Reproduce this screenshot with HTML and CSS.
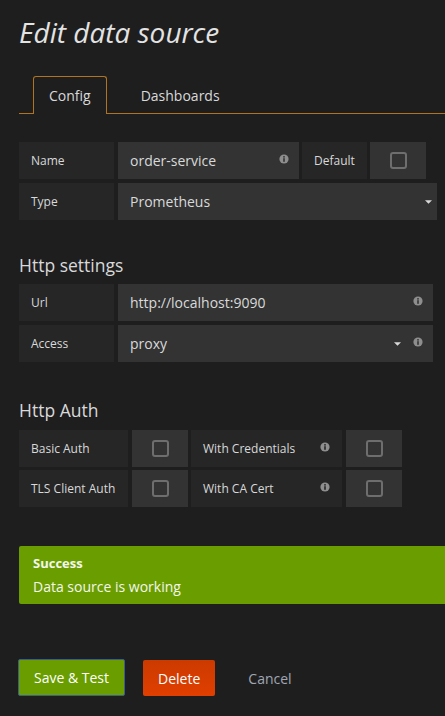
FILE: index.html
```html
<!DOCTYPE html>
<html lang="en">
<head>
    <meta charset="UTF-8">
    <title>Edit data source</title>
    <link rel="stylesheet" href="styles.css">
</head>
<body>

<div class="page">
    <h1 class="page-title">Edit data source</h1>

    <ul class="tabs">
        <li class="tab active">Config</li>
        <li class="tab">Dashboards</li>
    </ul>

    <div class="form-group first">
        <div class="form-row">
            <div class="form-label w-95">Name</div>
            <div class="form-input w-181">
                <span>order-service</span>
                <svg class="info" viewBox="0 0 10 10"><circle cx="5" cy="5" r="4.6" fill="#8e8e8e"/><rect x="4.2" y="4.2" width="1.6" height="3.6" fill="#333"/><rect x="4.2" y="2.1" width="1.6" height="1.5" fill="#333"/></svg>
            </div>
            <div class="form-label w-65 snug">Default</div>
            <div class="form-check snug"><span class="checkbox"></span></div>
        </div>
        <div class="form-row">
            <div class="form-label w-95">Type</div>
            <div class="form-input select w-319">
                <span>Prometheus</span>
                <svg class="caret" viewBox="0 0 8 4"><path d="M0 0 L8 0 L4 4 Z" fill="#d8d9da"/></svg>
            </div>
        </div>
    </div>

    <h3 class="section-title">Http settings</h3>
    <div class="form-group">
        <div class="form-row">
            <div class="form-label w-95">Url</div>
            <div class="form-input w-315">
                <span>http://localhost:9090</span>
                <svg class="info" viewBox="0 0 10 10"><circle cx="5" cy="5" r="4.6" fill="#8e8e8e"/><rect x="4.2" y="4.2" width="1.6" height="3.6" fill="#333"/><rect x="4.2" y="2.1" width="1.6" height="1.5" fill="#333"/></svg>
            </div>
        </div>
        <div class="form-row">
            <div class="form-label w-95">Access</div>
            <div class="form-input w-315">
                <span>proxy</span>
                <svg class="caret small" viewBox="0 0 8 4"><path d="M0 0 L8 0 L4 4 Z" fill="#d8d9da"/></svg>
                <svg class="info" viewBox="0 0 10 10"><circle cx="5" cy="5" r="4.6" fill="#8e8e8e"/><rect x="4.2" y="4.2" width="1.6" height="3.6" fill="#333"/><rect x="4.2" y="2.1" width="1.6" height="1.5" fill="#333"/></svg>
            </div>
        </div>
    </div>

    <h3 class="section-title auth">Http Auth</h3>
    <div class="form-group tight">
        <div class="form-row">
            <div class="form-label w-109">Basic Auth</div>
            <div class="form-check"><span class="checkbox"></span></div>
            <div class="form-label w-151 snug has-info">
                <span>With Credentials</span>
                <svg class="info" viewBox="0 0 10 10"><circle cx="5" cy="5" r="4.6" fill="#8e8e8e"/><rect x="4.2" y="4.2" width="1.6" height="3.6" fill="#262626"/><rect x="4.2" y="2.1" width="1.6" height="1.5" fill="#262626"/></svg>
            </div>
            <div class="form-check"><span class="checkbox"></span></div>
        </div>
        <div class="form-row">
            <div class="form-label w-109">TLS Client Auth</div>
            <div class="form-check"><span class="checkbox"></span></div>
            <div class="form-label w-151 snug has-info">
                <span>With CA Cert</span>
                <svg class="info" viewBox="0 0 10 10"><circle cx="5" cy="5" r="4.6" fill="#8e8e8e"/><rect x="4.2" y="4.2" width="1.6" height="3.6" fill="#262626"/><rect x="4.2" y="2.1" width="1.6" height="1.5" fill="#262626"/></svg>
            </div>
            <div class="form-check"><span class="checkbox"></span></div>
        </div>
    </div>

    <div class="alert alert-success">
        <div class="alert-title">Success</div>
        <div class="alert-text">Data source is working</div>
    </div>

    <div class="actions">
        <button class="btn btn-success">Save &amp; Test</button>
        <button class="btn btn-danger">Delete</button>
        <a class="btn btn-link">Cancel</a>
    </div>
</div>

</body>
</html>
```

FILE: styles.css
```css
:root {
    --page-bg: #1f1e1f;
    --label-bg: #262626;
    --input-bg: #333333;
    --text: #d8d9da;
    --tab-border: #b0741f;
    --green: #6a9e00;
}

body {
    background: var(--page-bg);
    color: var(--text);
    font-family: "Open Sans", "Liberation Sans", sans-serif;
    font-size: 13px;
    margin: 0;
    overflow: hidden;
}

.page { padding-left: 19px; }

.page-title {
    margin: 0;
    padding-top: 15px;
    font-size: 28px;
    line-height: 34px;
    font-style: italic;
    font-weight: 400;
    color: #e3e3e3;
}

/* tabs */
.tabs {
    list-style: none;
    margin: 27px 0 0;
    padding: 0;
    display: flex;
    align-items: flex-end;
    height: 37px;
    border-bottom: 1px solid var(--tab-border);
}
.tab {
    font-size: 14px;
    line-height: 37px;
    padding: 0 15px;
    border: 1px solid transparent;
    border-bottom: none;
    margin-bottom: -1px;
}
.tab.active {
    margin-left: 14px;
    border-color: var(--tab-border);
    border-radius: 3px 3px 0 0;
    background: var(--page-bg);
}
.tab + .tab { margin-left: 18px; }

/* form */
.form-group { display: flex; flex-direction: column; gap: 4px; }
.form-group.first { margin-top: 28px; }
.form-group.tight { gap: 3px; }
.form-row { display: flex; gap: 4px; height: 37px; }

.form-label {
    background: var(--label-bg);
    font-size: 12px;
    padding: 0 12px;
    display: flex;
    align-items: center;
    box-sizing: border-box;
}
.form-label.has-info { justify-content: space-between; }
.snug { margin-left: -1px; }

.form-input {
    background: var(--input-bg);
    font-size: 14px;
    padding: 0 10px 0 12px;
    display: flex;
    align-items: center;
    box-sizing: border-box;
}
.form-input span { flex: 1; }
.form-input.select { padding-right: 5px; }

.w-95 { width: 95px; }
.w-65 { width: 65px; }
.w-109 { width: 109px; }
.w-151 { width: 151px; }
.w-181 { width: 181px; }
.w-315 { width: 315px; }
.w-319 { width: 319px; }

.info { width: 10px; height: 10px; margin-top: -3px; }
.caret { width: 7px; height: 4px; }
.caret.small { margin-right: 12px; }

.form-check {
    width: 56px;
    background: var(--input-bg);
    display: flex;
    align-items: center;
    justify-content: center;
}
.checkbox {
    width: 13px;
    height: 13px;
    border: 2px solid #6e6e6e;
    border-radius: 3px;
}

.section-title {
    margin: 34px 0 8px;
    font-size: 17.5px;
    line-height: 22px;
    font-weight: 400;
}
.section-title.auth { margin: 37px 0 9px; }

/* alert */
.alert {
    margin-top: 39px;
    padding: 6px 14px;
    line-height: 23px;
    border-radius: 2px 0 0 2px;
}
.alert-success { background: var(--green); color: #f4f6ec; }
.alert-title { font-weight: bold; font-size: 13px; }
.alert-text { font-size: 14px; }

/* buttons */
.actions {
    margin-top: 55px;
    margin-left: -1px;
    display: flex;
    align-items: flex-end;
    gap: 18px;
}
.btn {
    font-family: inherit;
    font-size: 14px;
    color: #fff;
    border: none;
    padding: 0 15px;
    height: 36px;
    border-radius: 2px;
}
.btn-success {
    background: var(--green);
    border: 1px solid #3a5f8f;
    height: 37px;
}
.btn-danger { background: linear-gradient(#cc3a00, #e03f00); }
.btn-link {
    color: #9fa7b3;
    display: flex;
    align-items: center;
}
```
